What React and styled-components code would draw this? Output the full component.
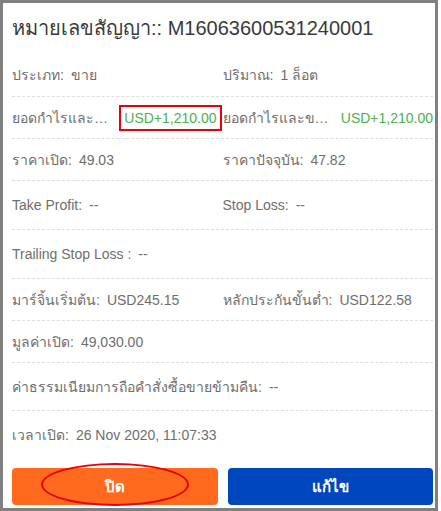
import React from "react";
import styled, { createGlobalStyle } from "styled-components";

const GlobalStyle = createGlobalStyle`
  html, body {
    margin: 0;
    padding: 0;
    background: #ffffff;
  }
  body {
    font-family: "Liberation Sans", Arial, sans-serif;
  }
`;

const Card = styled.div`
  width: 438px;
  height: 511px;
  box-sizing: border-box;
  border: 3px solid #808080;
  background: #ffffff;
  padding: 0 2px 0 9px;
  display: flex;
  flex-direction: column;
  position: relative;
`;

const Title = styled.h1`
  margin: 0;
  height: 50px;
  display: flex;
  align-items: center;
  font-size: 20px;
  font-weight: normal;
  color: #3a3a3a;
  white-space: nowrap;
`;

const Row = styled.div`
  height: ${({ h }) => h}px;
  box-sizing: border-box;
  display: grid;
  grid-template-columns: 1fr 1fr;
  align-items: center;
  border-bottom: ${({ last }) => (last ? "none" : "1px dashed #dddddd")};
  font-size: 14px;
  color: #6e6e6e;
`;

const Field = styled.div`
  display: flex;
  align-items: center;
  min-width: 0;
  white-space: nowrap;
  grid-column: ${({ wide }) => (wide ? "1 / span 2" : "auto")};
`;

const Label = styled.span`
  overflow: hidden;
  text-overflow: ellipsis;
  flex: ${({ clip }) => (clip ? "1 1 auto" : "0 0 auto")};
  min-width: 0;
`;

const Value = styled.span`
  margin-left: ${({ green }) => (green ? "8px" : "7px")};
  color: ${({ green }) => (green ? "#4caf50" : "#6e6e6e")};
  flex: 0 0 auto;
  padding: ${({ boxed }) => (boxed ? "3px 3px" : "0")};
  border: ${({ boxed }) => (boxed ? "2px solid #e8000b" : "none")};
  margin-right: ${({ boxed }) => (boxed ? "1px" : "0")};
`;

const Actions = styled.div`
  margin-top: 10px;
  display: grid;
  grid-template-columns: 1fr 1fr;
  gap: 10px;
  position: relative;
`;

const Button = styled.button`
  height: 37px;
  border: none;
  border-radius: 4px;
  background: ${({ primary }) => (primary ? "#0046bd" : "#ff6a1f")};
  color: #ffffff;
  font-family: "Liberation Sans", Arial, sans-serif;
  font-size: 15px;
  font-weight: bold;
  cursor: pointer;
`;

const Ring = styled.div`
  position: absolute;
  left: 29px;
  top: -5px;
  width: 144px;
  height: 39px;
  border: 2px solid #e8000b;
  border-radius: 50%;
  pointer-events: none;
`;

const pnl = "USD+1,210.00";

export default function App() {
  return (
    <>
      <GlobalStyle />
      <Card>
        <Title>หมายเลขสัญญา:: M16063600531240001</Title>
        <Row h={44}>
          <Field>
            <Label>ประเภท:</Label>
            <Value>ขาย</Value>
          </Field>
          <Field>
            <Label>ปริมาณ:</Label>
            <Value>1 ล็อต</Value>
          </Field>
        </Row>
        <Row h={42}>
          <Field>
            <Label clip>ยอดกำไรและขาดทุน</Label>
            <Value green boxed>{pnl}</Value>
          </Field>
          <Field>
            <Label clip>ยอดกำไรและขาดทุน</Label>
            <Value green>{pnl}</Value>
          </Field>
        </Row>
        <Row h={42}>
          <Field>
            <Label>ราคาเปิด:</Label>
            <Value>49.03</Value>
          </Field>
          <Field>
            <Label>ราคาปัจจุบัน:</Label>
            <Value>47.82</Value>
          </Field>
        </Row>
        <Row h={49}>
          <Field>
            <Label>Take Profit:</Label>
            <Value>--</Value>
          </Field>
          <Field>
            <Label>Stop Loss:</Label>
            <Value>--</Value>
          </Field>
        </Row>
        <Row h={49}>
          <Field wide>
            <Label>Trailing Stop Loss :</Label>
            <Value>--</Value>
          </Field>
        </Row>
        <Row h={42}>
          <Field>
            <Label>มาร์จิ้นเริ่มต้น:</Label>
            <Value>USD245.15</Value>
          </Field>
          <Field>
            <Label>หลักประกันขั้นต่ำ:</Label>
            <Value>USD122.58</Value>
          </Field>
        </Row>
        <Row h={42}>
          <Field wide>
            <Label>มูลค่าเปิด:</Label>
            <Value>49,030.00</Value>
          </Field>
        </Row>
        <Row h={48}>
          <Field wide>
            <Label>ค่าธรรมเนียมการถือคำสั่งซื้อขายข้ามคืน:</Label>
            <Value>--</Value>
          </Field>
        </Row>
        <Row h={47} last>
          <Field wide>
            <Label>เวลาเปิด:</Label>
            <Value>26 Nov 2020, 11:07:33</Value>
          </Field>
        </Row>
        <Actions>
          <Button>ปิด</Button>
          <Button primary>แก้ไข</Button>
          <Ring />
        </Actions>
      </Card>
    </>
  );
}
